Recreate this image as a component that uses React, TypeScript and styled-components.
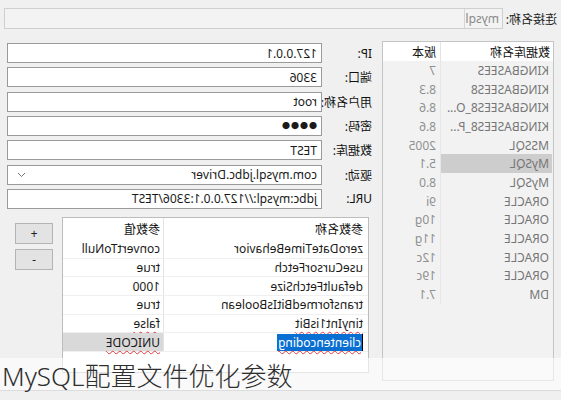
import React from "react";
import styled, { createGlobalStyle } from "styled-components";

const GlobalStyle = createGlobalStyle`
  html, body {
    margin: 0;
    padding: 0;
    background: #f0f0f0;
  }
  body {
    font-family: "Noto Sans", "Noto Sans CJK SC", sans-serif;
  }
`;

const dbRows = [
  { name: "KINGBASEES", ver: "7" },
  { name: "KINGBASEES8", ver: "8.3" },
  { name: "KINGBASEES8_O...", ver: "8.6" },
  { name: "KINGBASEES8_P...", ver: "8.6" },
  { name: "MSSQL", ver: "2005" },
  { name: "MySQL", ver: "5.1", selected: true },
  { name: "MySQL", ver: "8.0" },
  { name: "ORACLE", ver: "9i" },
  { name: "ORACLE", ver: "10g" },
  { name: "ORACLE", ver: "11g" },
  { name: "ORACLE", ver: "12c" },
  { name: "ORACLE", ver: "19c" },
  { name: "DM", ver: "7.1" },
];

const formRows = [
  { label: "IP:", value: "127.0.0.1" },
  { label: "端口:", value: "3306" },
  { label: "用户名称:", value: "root" },
  { label: "密码:", value: "●●●●", password: true },
  { label: "数据库:", value: "TEST" },
  { label: "驱动:", value: "com.mysql.jdbc.Driver", combo: true },
  { label: "URL:", value: "jdbc:mysql://127.0.0.1:3306/TEST" },
];

const params = [
  { name: "zeroDateTimeBehavior", value: "convertToNull" },
  { name: "useCursorFetch", value: "true" },
  { name: "defaultFetchSize", value: "1000" },
  { name: "transformedBitIsBoolean", value: "true" },
  { name: "tinyInt1isBit", value: "false", spell: true },
  { name: "clientencoding", value: "UNICODE", spell: true, editing: true },
];

export default function App() {
  return (
    <Page>
      <GlobalStyle />
      <Dialog>
        <TopRow>
          <TopLabel>连接名称:</TopLabel>
          <TopInput>
            <NameChip>mysql</NameChip>
          </TopInput>
        </TopRow>
        <Body>
          <DbTable>
            <DbHeader>
              <DbHeadCell>数据库名称</DbHeadCell>
              <DbHeadCell $last>版本</DbHeadCell>
            </DbHeader>
            {dbRows.map((r, i) => (
              <DbRow key={i}>
                <DbCell $selected={r.selected}>{r.name}</DbCell>
                <DbVer>{r.ver}</DbVer>
              </DbRow>
            ))}
          </DbTable>
          <RightCol>
            <Form>
              {formRows.map((r) => (
                <React.Fragment key={r.label}>
                  <FieldLabel>{r.label}</FieldLabel>
                  <Field $password={r.password}>
                    <span>{r.value}</span>
                    {r.combo && (
                      <svg width="9" height="6" viewBox="0 0 9 6">
                        <path d="M1 1l3.5 3.5L8 1" fill="none" stroke="#707070" strokeWidth="1" />
                      </svg>
                    )}
                  </Field>
                </React.Fragment>
              ))}
            </Form>
            <ParamArea>
              <ParamTable>
                <ParamHeader>
                  <ParamHeadCell>参数名称</ParamHeadCell>
                  <ParamHeadCell $last>参数值</ParamHeadCell>
                </ParamHeader>
                {params.map((p) => (
                  <ParamRow key={p.name}>
                    <ParamName>
                      {p.editing ? (
                        <Editing>
                          <Highlight>{p.name}</Highlight>
                        </Editing>
                      ) : (
                        <Spell $on={p.spell}>{p.name}</Spell>
                      )}
                    </ParamName>
                    <ParamValue $selected={p.editing}>
                      <Spell $on={p.spell}>{p.value}</Spell>
                    </ParamValue>
                  </ParamRow>
                ))}
              </ParamTable>
              <Buttons>
                <SmallButton>+</SmallButton>
                <SmallButton>-</SmallButton>
              </Buttons>
            </ParamArea>
          </RightCol>
        </Body>
      </Dialog>
      <CaptionBand />
      <Caption>MySQL配置文件优化参数</Caption>
    </Page>
  );
}

const Page = styled.div`
  position: relative;
  width: 561px;
  height: 400px;
  overflow: hidden;
  background: #f0f0f0;
`;

const Dialog = styled.div`
  width: 561px;
  height: 400px;
  box-sizing: border-box;
  padding: 8px 4px 0 4px;
  transform: scaleX(-1);
  font-size: 12px;
  color: #1a1a1a;
`;

const TopRow = styled.div`
  display: flex;
  align-items: center;
  gap: 3px;
  height: 21px;
`;

const TopLabel = styled.div`
  width: 51px;
  white-space: nowrap;
  color: #222;
`;

const TopInput = styled.div`
  flex: 1;
  height: 21px;
  box-sizing: border-box;
  border: 1px solid #cfcfcf;
  background: #f3f3f3;
  display: flex;
  align-items: stretch;
`;

const NameChip = styled.div`
  width: 38px;
  box-sizing: border-box;
  border-right: 1px solid #d6d6d6;
  color: #8a8a8a;
  display: flex;
  align-items: center;
  padding-left: 3px;
`;

const Body = styled.div`
  display: flex;
  gap: 10px;
  margin-top: 12px;
`;

const DbTable = styled.div`
  margin-left: 3px;
  width: 172px;
  height: 340px;
  box-sizing: border-box;
  border: 1px solid #c4c4c4;
  background: #f2f2f2;
  display: flex;
  flex-direction: column;
`;

const DbHeader = styled.div`
  display: grid;
  grid-template-columns: 113px 57px;
  height: 19px;
  background: #fff;
`;

const DbHeadCell = styled.div<{ $last?: boolean }>`
  display: flex;
  align-items: center;
  padding-left: ${(p) => (p.$last ? 4 : 3)}px;
  border-right: ${(p) => (p.$last ? "none" : "1px solid #e3e3e3")};
  color: #111;
`;

const DbRow = styled.div`
  display: grid;
  grid-template-columns: 113px 57px;
  height: 18.7px;
`;

const DbCell = styled.div<{ $selected?: boolean }>`
  display: flex;
  align-items: center;
  padding-left: 3px;
  margin-left: 1px;
  background: ${(p) => (p.$selected ? "#cdcdcd" : "transparent")};
  border-right: 1px solid #e6e6e6;
  color: #767676;
  white-space: nowrap;
`;

const DbVer = styled.div`
  display: flex;
  align-items: center;
  padding-left: 4px;
  color: #909090;
`;

const RightCol = styled.div`
  width: 365px;
  display: flex;
  flex-direction: column;
`;

const Form = styled.div`
  display: grid;
  grid-template-columns: 50px 315px;
  grid-auto-rows: 20px;
  row-gap: 4.33px;
  margin-top: 2px;
`;

const FieldLabel = styled.div`
  display: flex;
  align-items: center;
  white-space: nowrap;
  color: #111;
`;

const Field = styled.div<{ $password?: boolean }>`
  box-sizing: border-box;
  border: 1px solid #9a9a9a;
  background: #fff;
  display: flex;
  align-items: center;
  justify-content: space-between;
  padding: 0 9px 0 4px;
  letter-spacing: ${(p) => (p.$password ? "1px" : "0")};
  font-size: ${(p) => (p.$password ? "8px" : "12px")};
  white-space: nowrap;
`;

const ParamArea = styled.div`
  display: flex;
  gap: 9px;
  margin-top: 8px;
  margin-left: 3px;
`;

const ParamTable = styled.div`
  width: 307px;
  height: 156px;
  box-sizing: border-box;
  border: 1px solid #bdbdbd;
  background: #fff;
  display: flex;
  flex-direction: column;
`;

const ParamHeader = styled.div`
  display: grid;
  grid-template-columns: 205px 100px;
  height: 22px;
`;

const ParamHeadCell = styled.div<{ $last?: boolean }>`
  display: flex;
  align-items: flex-end;
  padding: 0 0 2px ${(p) => (p.$last ? 3 : 5)}px;
  border-right: ${(p) => (p.$last ? "none" : "1px solid #e3e3e3")};
  color: #111;
`;

const ParamRow = styled.div`
  display: grid;
  grid-template-columns: 205px 100px;
  height: 18.7px;
  box-sizing: border-box;
  border-bottom: 1px solid #efefef;
`;

const ParamName = styled.div`
  display: flex;
  align-items: center;
  padding-left: 5px;
  border-right: 1px solid #e3e3e3;
  white-space: nowrap;
`;

const ParamValue = styled.div<{ $selected?: boolean }>`
  display: flex;
  align-items: center;
  padding-left: 3px;
  background: ${(p) => (p.$selected ? "#d9d9d9" : "transparent")};
  white-space: nowrap;
`;

const Spell = styled.span<{ $on?: boolean }>`
  text-decoration: ${(p) => (p.$on ? "underline wavy #e0393e" : "none")};
  text-decoration-thickness: 1px;
  text-underline-offset: 3px;
`;

const Editing = styled.span`
  display: inline-flex;
  text-decoration: underline wavy #e0393e;
  text-decoration-thickness: 1px;
  text-underline-offset: 3px;
`;

const Highlight = styled.span`
  background: #0a6fd3;
  color: #fff;
  padding: 0 1px;
  border-left: 1px solid #000;
`;

const Buttons = styled.div`
  display: flex;
  flex-direction: column;
  gap: 5px;
  margin-top: 6px;
`;

const SmallButton = styled.div`
  width: 38px;
  height: 21px;
  box-sizing: border-box;
  border: 1px solid #b4b4b4;
  background: #e3e3e3;
  display: flex;
  align-items: center;
  justify-content: center;
  font-size: 12px;
  color: #222;
`;

const CaptionBand = styled.div`
  position: absolute;
  left: 0;
  right: 0;
  top: 358px;
  height: 32px;
  background: rgba(255, 255, 255, 0.6);
  border-bottom: 1px solid #dcdcdc;
`;

const Caption = styled.div`
  position: absolute;
  left: 2px;
  top: 356px;
  font-family: "Noto Sans", "Noto Sans CJK SC", sans-serif;
  font-size: 26px;
  font-weight: 300;
  line-height: 40px;
  color: #2e2e2e;
  white-space: nowrap;
`;
